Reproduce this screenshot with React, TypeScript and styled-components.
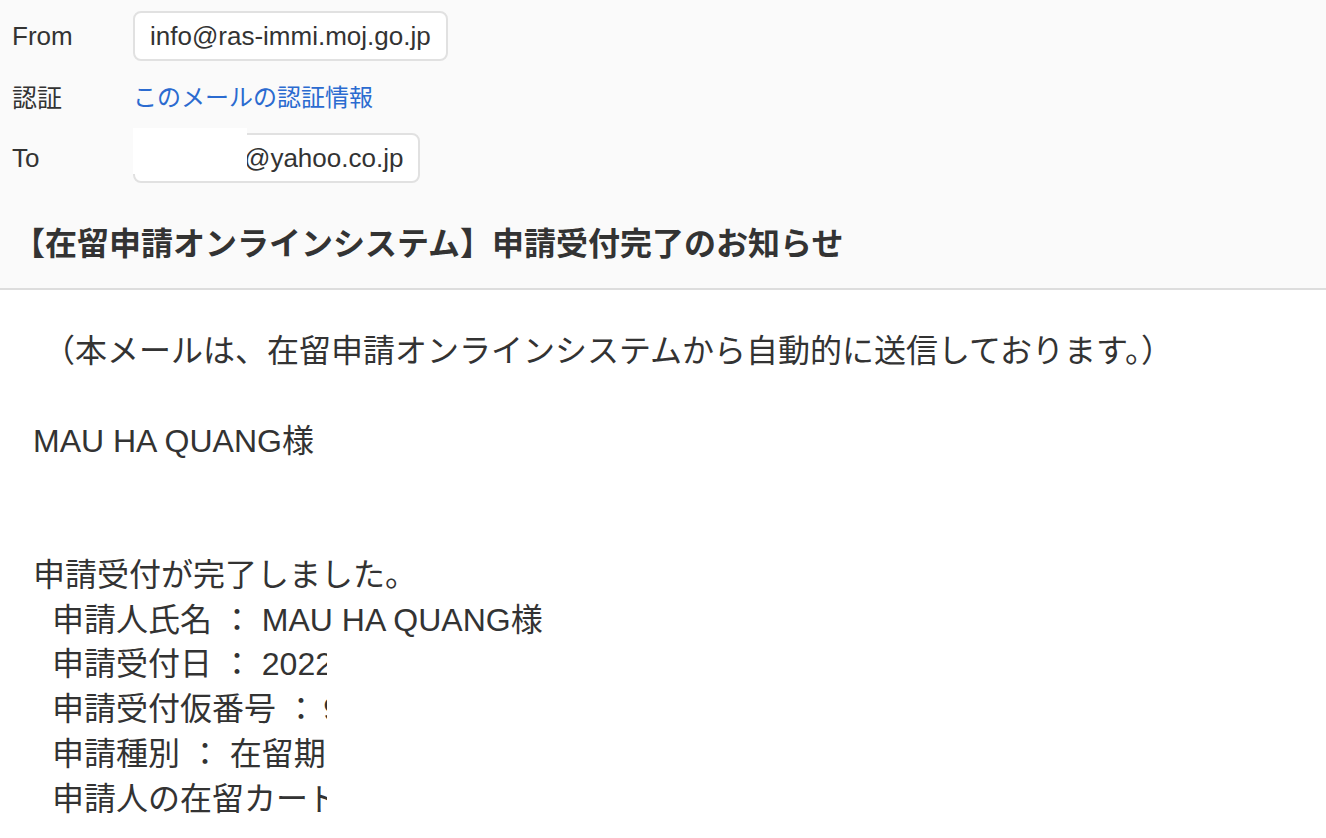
import React from "react";
import styled, { createGlobalStyle } from "styled-components";

const Global = createGlobalStyle`
  html, body { margin: 0; padding: 0; background: #ffffff; }
  body { font-family: "Liberation Sans", "Noto Sans CJK JP", sans-serif; color: #333333; }
`;

const Page = styled.div`
  width: 1326px;
  height: 838px;
  overflow: hidden;
  background: #ffffff;
`;

const Header = styled.header`
  background: #fafafa;
  border-bottom: 2px solid #dddddd;
  padding: 11px 0 24px 12px;
  height: 290px;
  box-sizing: border-box;
`;

const Fields = styled.div`
  display: grid;
  grid-template-columns: 121px auto;
  grid-auto-rows: 50px;
  row-gap: 11px;
  justify-content: start;
  align-items: center;
`;

const Label = styled.div<{ $cjk?: boolean }>`
  font-size: ${(p) => (p.$cjk ? 25 : 26)}px;
  color: #333333;
  ${(p) => (p.$cjk ? "margin-top: -3px;" : "")}
`;

const Pill = styled.div`
  position: relative;
  justify-self: start;
  height: 50px;
  box-sizing: border-box;
  display: flex;
  align-items: center;
  padding: 0 15px;
  background: #ffffff;
  border: 2px solid #e1e1e1;
  border-radius: 8px;
  font-size: 26px;
  color: #333333;
`;

const Spacer = styled.span<{ $w: number }>`
  display: inline-block;
  width: ${(p) => p.$w}px;
`;

const Redaction = styled.div`
  position: absolute;
  left: -2px;
  top: -7px;
  width: 114px;
  height: 46px;
  background: #ffffff;
`;

const Link = styled.a`
  font-size: 24px;
  color: #2b6bd0;
  text-decoration: none;
  margin-top: -3px;
`;

const Subject = styled.h1`
  margin: 41px 0 0 1px;
  font-size: 32px;
  line-height: 40px;
  font-weight: 700;
  color: #333333;
`;

const Body = styled.main`
  padding: 39px 0 0 33px;
  font-size: 32px;
  line-height: 44.75px;
  color: #333333;
`;

const Line = styled.div<{ $indent?: number; $clip?: boolean }>`
  box-sizing: border-box;
  padding-left: ${(p) => p.$indent ?? 0}px;
  white-space: pre;
  min-height: 44.75px;
  ${(p) => (p.$clip ? "width: 294px; overflow: hidden;" : "")}
`;

export default function App() {
  return (
    <Page>
      <Global />
      <Header>
        <Fields>
          <Label>From</Label>
          <Pill>info@ras-immi.moj.go.jp</Pill>
          <Label $cjk>認証</Label>
          <Link href="#">このメールの認証情報</Link>
          <Label>To</Label>
          <Pill>
            <Spacer $w={94} />
            @yahoo.co.jp
            <Redaction />
          </Pill>
        </Fields>
        <Subject>【在留申請オンラインシステム】申請受付完了のお知らせ</Subject>
      </Header>
      <Body>
        <Line $indent={10}>（本メールは、在留申請オンラインシステムから自動的に送信しております。）</Line>
        <Line />
        <Line>MAU HA QUANG様</Line>
        <Line />
        <Line />
        <Line>申請受付が完了しました。</Line>
        <Line $indent={19}>申請人氏名 ： MAU HA QUANG様</Line>
        <Line $indent={19} $clip>申請受付日 ： 2022年</Line>
        <Line $indent={19} $clip>{"申請受付仮番号 ：\u20099"}</Line>
        <Line $indent={19} $clip>申請種別 ： 在留期間</Line>
        <Line $indent={19} $clip>申請人の在留カード番号</Line>
      </Body>
    </Page>
  );
}
